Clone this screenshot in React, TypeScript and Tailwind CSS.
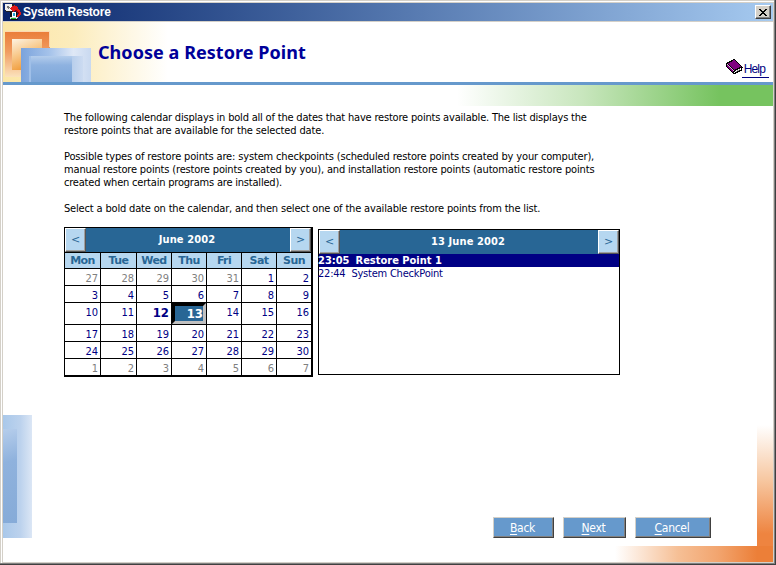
import React from "react";

const days = ["Mon", "Tue", "Wed", "Thu", "Fri", "Sat", "Sun"];
const weeks = [
  [27, 28, 29, 30, 31, 1, 2],
  [3, 4, 5, 6, 7, 8, 9],
  [10, 11, 12, 13, 14, 15, 16],
  [17, 18, 19, 20, 21, 22, 23],
  [24, 25, 26, 27, 28, 29, 30],
  [1, 2, 3, 4, 5, 6, 7],
];

function RestoreIcon() {
  return (
    <svg width="16" height="16" viewBox="0 0 16 16" shapeRendering="crispEdges">
      <path d="M0 0h9v3h1v1H8v5H6V8H1V7H0z" fill="#222" />
      <path d="M0 0h7v7H1V6H0z" fill="#eeeeee" />
      <path d="M2 2h2v1h1v1H4v1H3V4H2z" fill="#777" />
      <path d="M6 3h1V2h2V1h1v1h2v1h1v2h1v1h1v2h1v3h-1v1h-1v1h-2v-2h1V9h-1V8h-1V7H9v1H8V7H7V6H6V5H5V4h1z" fill="#e01818" />
      <path d="M10 6h2v1h1v1h1v2h-1V9h-1V8h-1V7h-1z" fill="#8d0808" />
      <path d="M5 8h7v6H6v-1H5z" fill="#111" />
      <path d="M7 8h4v5H7z" fill="#fff" />
      <path d="M8 9h2v3H8z" fill="#28a4d8" />
      <path d="M5 13h8v1h-1v1H5z" fill="#ddd" />
      <path d="M6 14h5v1H6z" fill="#18b028" />
      <path d="M6 15h7v1H6z" fill="#111" />
    </svg>
  );
}

function BookIcon() {
  return (
    <svg width="17" height="16" viewBox="0 0 17 16" shapeRendering="crispEdges">
      <path d="M7 0h2v1h1v1h1v1h1v1h1v1h1v1h1v1h1v1h1v1h-1v3h-2v1h-2v1h-2v1H7v-1H6v-1H5v-1H4v-1H3v-1H2V9H1V8H0V4h1V3h2V2h2V1h2z" fill="#000" />
      <path d="M7 1h2v1h1v1h1v1h1v1h1v1h1v1h1v1h-2v1h-2v1H9v1H8v-1H7V9H6V8H5V7H4V6H3V5H2V4h2V3h2V2h1z" fill="#800080" />
      <path d="M1 6h1v1h1v1h1v1h1v1h1v1h1v2H6v-1H5v-1H4v-1H3V9H2V8H1z" fill="#800080" />
      <path d="M1 5h1v1h1v1h1v1h1v1h1v1h1v1h1v1H7v-1H6v-1H5V9H4V8H3V7H2V6H1z" fill="#d9c0d9" />
      <path d="M9 12h1v-1h2v-1h2V9h1v2h-2v1h-2v1H9v1H8v-1h1z" fill="#fff" />
      <path d="M10 12h1v-1h2v-1h1v1h-1v1h-2v1h-1z" fill="#aaa" />
    </svg>
  );
}

function ArrowButton({ children }: { children: React.ReactNode }) {
  return (
    <button className="flex h-6 w-[21px] shrink-0 items-center justify-center border border-t-white border-l-white border-r-[#555] border-b-[#555] bg-[#b6d7f0] font-['DejaVu_Sans',sans-serif] text-[11px] text-[#286695] shadow-[inset_-1px_-1px_0_#a0a0a0]">
      {children}
    </button>
  );
}

function PanelHeader({ title }: { title: string }) {
  return (
    <div className="flex h-6 items-center justify-between bg-[#286695] text-white">
      <ArrowButton>&lt;</ArrowButton>
      <span className="pr-0.5 pt-px font-['DejaVu_Sans_Condensed','DejaVu_Sans',sans-serif] text-[11px] font-bold tracking-[0.12px]">{title}</span>
      <ArrowButton>&gt;</ArrowButton>
    </div>
  );
}

function ActionButton({ first, rest, width }: { first: string; rest: string; width: string }) {
  return (
    <button className={`${width} flex h-[21px] items-center justify-center border border-t-[#d4d0c8] border-l-[#d4d0c8] border-r-[#404040] border-b-[#404040] bg-[#6699cc] pr-0.5 text-[12px] tracking-[-0.3px] text-white shadow-[inset_-1px_-1px_0_#808080]`}>
      <span><span className="underline underline-offset-2">{first}</span>{rest}</span>
    </button>
  );
}

function DayCell({ day, muted }: { day: number; muted: boolean }) {
  if (!muted && day === 13) {
    return (
      <div className="border-3 border-t-black border-l-black border-r-[#c0c0c0] border-b-[#c0c0c0] bg-[#286695] text-right font-['DejaVu_Sans_Condensed','DejaVu_Sans',sans-serif] text-[13px] leading-[16px] font-bold text-white">
        13
      </div>
    );
  }
  const bold = !muted && day === 12;
  return (
    <div className={`bg-white pr-0.5 pt-0.5 text-right ${bold ? "text-[13px] font-bold" : "text-[11px]"} leading-[15px] ${muted ? "text-[#808080]" : "text-[#000084]"}`}>
      {day}
    </div>
  );
}

export default function App() {
  return (
    <div className="h-[565px] w-[776px] overflow-hidden border-r border-b border-[#404040] bg-[#d4d0c8] font-['DejaVu_Sans_Condensed','DejaVu_Sans',sans-serif] text-[11px]">
      <div className="h-[564px] w-[775px] border-r border-b border-r-[#808080] border-b-[#808080] pt-px pl-px">
        <div className="h-[562px] w-[773px] border-t border-l border-white pt-px pl-px">
          <div className="flex h-[18px] w-[770px] items-center justify-between bg-linear-to-r from-[#0a246a] to-[#a6caf0] pr-0.5 pl-0.5">
            <div className="flex items-center gap-0.5">
              <RestoreIcon />
              <span className="font-['Liberation_Sans',sans-serif] text-[12px] leading-[18px] font-bold tracking-[-0.22px] text-white">System Restore</span>
            </div>
            <button className="flex h-[14px] w-4 items-center justify-center border border-t-white border-l-white border-r-[#404040] border-b-[#404040] bg-[#d4d0c8] pr-px shadow-[inset_-1px_-1px_0_#808080]">
              <svg width="8" height="7" viewBox="0 0 8 7" shapeRendering="crispEdges">
                <path d="M0 0h2v1h1v1h2V1h1V0h2v1H7v1H6v1H5v1h1v1h1v1h1v1H6V6H5V5H3v1H2v1H0V6h1V5h1V4h1V3H2V2H1V1H0z" fill="#000" />
              </svg>
            </button>
          </div>

          <div className="mt-px flex h-[540px] w-[770px] flex-col bg-white">
            <header className="flex h-[60px] shrink-0 bg-[linear-gradient(90deg,#fbe6a6_0,#fcecbc_70px,#fff_165px)]">
              <svg width="90" height="60" viewBox="0 0 90 60">
                <defs>
                  <linearGradient id="outerOrange" x1="0" y1="0" x2="0" y2="1">
                    <stop offset="0" stopColor="#ea7c38" />
                    <stop offset=".45" stopColor="#f09c60" />
                    <stop offset="1" stopColor="#fbe2bc" />
                  </linearGradient>
                  <linearGradient id="innerOrange" x1="0" y1="0" x2=".4" y2="1">
                    <stop offset="0" stopColor="#fdf3e2" />
                    <stop offset=".5" stopColor="#f8c98c" />
                    <stop offset="1" stopColor="#f09a38" />
                  </linearGradient>
                  <linearGradient id="outerBlue" x1="0" y1="0" x2="1" y2="0">
                    <stop offset="0" stopColor="#7ba3dc" />
                    <stop offset=".4" stopColor="#a4c2ea" />
                    <stop offset=".75" stopColor="#dfe8f6" />
                    <stop offset="1" stopColor="#c9d9f0" />
                  </linearGradient>
                  <linearGradient id="innerBlue" x1="0" y1="0" x2="0" y2="1">
                    <stop offset="0" stopColor="#b4cdec" />
                    <stop offset=".35" stopColor="#8eb2e0" />
                    <stop offset="1" stopColor="#7ba5d8" />
                  </linearGradient>
                  <linearGradient id="blueEdge" x1="0" y1="0" x2="1" y2="0">
                    <stop offset="0" stopColor="#9fbfe8" />
                    <stop offset=".75" stopColor="#b4cceb" />
                    <stop offset="1" stopColor="#ccdbf1" />
                  </linearGradient>
                </defs>
                <path d="M2 9h45v46H2z" fill="url(#outerOrange)" />
                <path d="M2 9.500h45M46.500 9v16" stroke="#fbd8b0" fill="none" />
                <path d="M9 17h30v31H9z" fill="url(#innerOrange)" />
                <path d="M18 26h70v34H18z" fill="url(#outerBlue)" />
                <path d="M26 34h54v26H26z" fill="url(#blueEdge)" />
                <path d="M28 34h41v26H28z" fill="url(#innerBlue)" />
              </svg>
              <h1 className="mt-[17px] ml-[5px] font-['Noto_Sans',sans-serif] text-[18px] leading-[26px] font-bold tracking-[0.05px] whitespace-nowrap text-[#000099]">Choose a Restore Point</h1>
              <a className="mt-[37px] mr-1 ml-auto flex items-start text-[#000080]">
                <BookIcon />
                <span className="-ml-px mt-[3px] border-b border-[#000080] pr-1 pl-0.5 font-['Liberation_Sans',sans-serif] text-[12px] leading-[15px] tracking-[-0.85px]">Help</span>
              </a>
            </header>
            <div className="h-[3px] shrink-0 bg-[#6699cc]" />
            <div className="ml-auto h-[21px] w-[316px] shrink-0 bg-[linear-gradient(90deg,#fff_0,#c8e6bd_40%,#76c35f_83%)]" />

            <div className="flex min-h-0 flex-1">
              <div className="mt-[309px] h-[123px] w-[29px] shrink-0 bg-[linear-gradient(90deg,#a9c8ea,#bcd2ed_60%,#dbe6f5)] pt-[14px]">
                <div className="h-[94px] w-[14px] bg-[linear-gradient(165deg,#b5cdeb,#8fb2dd_35%,#86abd8)]" />
              </div>

              <main className="ml-8 flex w-[693px] shrink-0 flex-col pt-[5px]">
                <div className="flex flex-col whitespace-nowrap leading-[13px] text-black">
                  <span className="tracking-[-0.195px]">The following calendar displays in bold all of the dates that have restore points available. The list displays the</span>
                  <span className="tracking-[-0.145px]">restore points that are available for the selected date.</span>
                  <span className="mt-[13px] tracking-[-0.155px]">Possible types of restore points are: system checkpoints (scheduled restore points created by your computer),</span>
                  <span className="tracking-[-0.16px]">manual restore points (restore points created by you), and installation restore points (automatic restore points</span>
                  <span className="tracking-[-0.2px]">created when certain programs are installed).</span>
                  <span className="mt-[13px] tracking-[-0.167px]">Select a bold date on the calendar, and then select one of the available restore points from the list.</span>
                </div>

                <div className="mt-3 flex h-[150px] items-start gap-[5px]">
                  <section className="w-[249px] border-t border-r-2 border-b-2 border-l border-black">
                    <PanelHeader title="June 2002" />
                    <div className="grid grid-cols-[35px_35px_34px_34px_34px_34px_34px] grid-rows-[15px_16px_16px_21px_16px_16px_16px] gap-px border-t border-black bg-black">
                      {days.map((d) => (
                        <div key={d} className="overflow-hidden bg-[#b6d7f0] text-center font-['DejaVu_Sans',sans-serif] text-[11px] leading-[16px] font-bold tracking-[-0.6px] text-[#286695]">{d}</div>
                      ))}
                      {weeks.map((week, w) =>
                        week.map((day, d) => (
                          <DayCell key={`${w}-${d}`} day={day} muted={(w === 0 && day > 20) || w === 5} />
                        ))
                      )}
                    </div>
                  </section>

                  <section className="mt-0.5 h-[146px] w-[302px] border border-black text-[#000080]">
                    <PanelHeader title="13 June 2002" />
                    <div className="flex h-[13px] gap-1.5 bg-[#000084] leading-[14px] font-bold text-white"><span className="-ml-px">23:05</span><span>Restore Point 1</span></div>
                    <div className="flex h-[13px] gap-1.5 leading-[14px] tracking-[-0.22px]"><span className="-ml-px">22:44</span><span>System CheckPoint</span></div>
                  </section>
                </div>

                <div className="mt-auto mb-2 ml-[429px] flex gap-[9px]">
                  <ActionButton first="B" rest="ack" width="w-[61px]" />
                  <ActionButton first="N" rest="ext" width="w-[63px]" />
                  <ActionButton first="C" rest="ancel" width="w-[76px]" />
                </div>
              </main>

              <div className="mt-[319px] h-[121px] w-4 shrink-0 bg-[linear-gradient(180deg,#fff,#f7c8a2_45%,#ee8440_90%)]" />
            </div>
            <div className="ml-auto h-4 w-[158px] shrink-0 bg-[linear-gradient(90deg,#fff,#f6bf95_40%,#f2a56f_65%,#ec7f38_90%)]" />
          </div>
        </div>
      </div>
    </div>
  );
}
